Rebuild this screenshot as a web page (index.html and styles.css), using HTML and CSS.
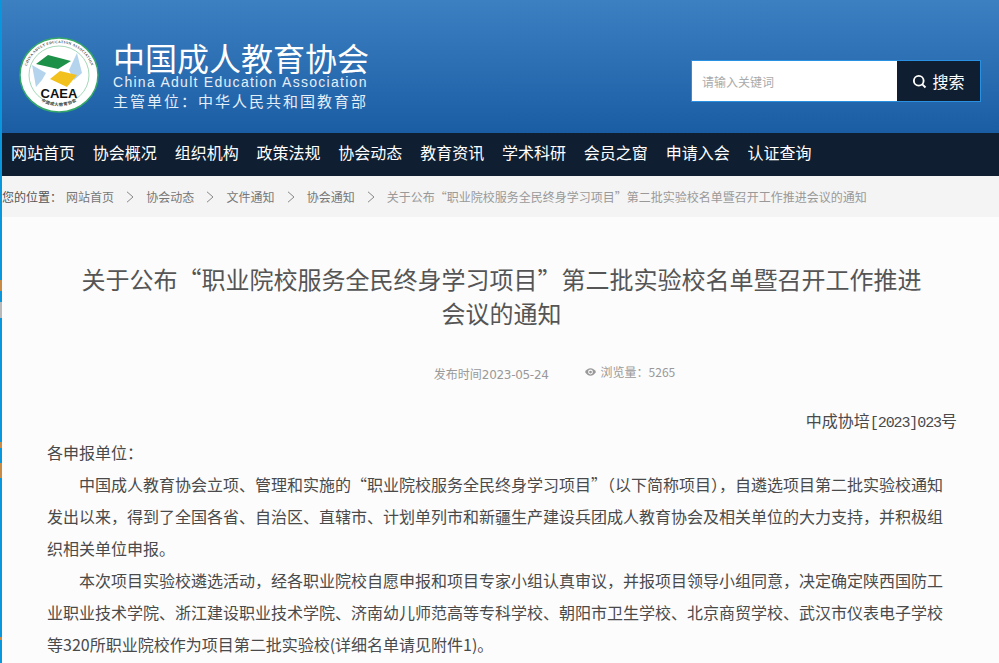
FILE: index.html
```html
<!DOCTYPE html>
<html lang="zh-CN">
<head>
    <meta charset="UTF-8">
    <meta name="viewport" content="width=device-width, initial-scale=1.0">
    <title>关于公布“职业院校服务全民终身学习项目”第二批实验校名单暨召开工作推进会议的通知</title>
    <link rel="stylesheet" href="styles.css">
</head>
<body>
    <div class="page">
        <header class="site-header">
            <div class="brand">
                <svg class="brand-logo" viewBox="0 0 80 76" preserveAspectRatio="none" aria-label="CAEA">
                    <defs>
                        <path id="ring-top" d="M6.500 38a33.500 32 0 0 1 67 0"/>
                        <path id="ring-bottom" d="M12 54a33 32 0 0 0 56 0"/>
                    </defs>
                    <ellipse cx="40" cy="38" rx="39" ry="37" fill="#fff" stroke="#35a869" stroke-width="1.500"/>
                    <ellipse cx="40" cy="38" rx="30" ry="29" fill="none" stroke="#8ccda5" stroke-width=".8"/>
                    <text class="logo-ring"><textPath href="#ring-top" startOffset="50%" text-anchor="middle">CHINA ADULT EDUCATION ASSOCIATION</textPath></text>
                    <text class="logo-ring-cn"><textPath href="#ring-bottom" startOffset="50%" text-anchor="middle">中国成人教育协会</textPath></text>
                    <polygon points="13,28 27,36 23,43 17,50" fill="#b4d4ee"/>
                    <polygon points="58,16 63,36 55,43 50,33" fill="#b4d4ee"/>
                    <polygon points="29,18 52,24 39,32 17,27" fill="#1d9147"/>
                    <polygon points="41,34 58,38 48,50 31,42" fill="#f2c11d"/>
                    <text class="logo-caea" x="40" y="61" text-anchor="middle">CAEA</text>
                </svg>
                <div class="brand-text">
                    <div class="brand-name">中国成人教育协会</div>
                    <div class="brand-en">China Adult Education Association</div>
                    <div class="brand-sub">主管单位：中华人民共和国教育部</div>
                </div>
            </div>
            <form class="search">
                <input class="search-input" type="text" placeholder="请输入关键词">
                <button class="search-btn" type="button">
                    <svg class="search-icon" viewBox="0 0 16 16"><circle cx="7.200" cy="7.200" r="5.200"/><path d="M11 11l3.400 3.400"/></svg>
                    搜索
                </button>
            </form>
        </header>

        <nav class="main-nav">
            <a href="#">网站首页</a>
            <a href="#">协会概况</a>
            <a href="#">组织机构</a>
            <a href="#">政策法规</a>
            <a href="#">协会动态</a>
            <a href="#">教育资讯</a>
            <a href="#">学术科研</a>
            <a href="#">会员之窗</a>
            <a href="#">申请入会</a>
            <a href="#">认证查询</a>
        </nav>

        <div class="crumbs">
            <span class="crumbs-label">您的位置：</span>
            <a href="#">网站首页</a>
            <svg class="crumb-sep" viewBox="0 0 8 12"><path d="M1 .8L7 6l-6 5.200"/></svg>
            <a href="#">协会动态</a>
            <svg class="crumb-sep" viewBox="0 0 8 12"><path d="M1 .8L7 6l-6 5.200"/></svg>
            <a href="#">文件通知</a>
            <svg class="crumb-sep" viewBox="0 0 8 12"><path d="M1 .8L7 6l-6 5.200"/></svg>
            <a href="#">协会通知</a>
            <svg class="crumb-sep" viewBox="0 0 8 12"><path d="M1 .8L7 6l-6 5.200"/></svg>
            <span class="crumb-current">关于公布“职业院校服务全民终身学习项目”第二批实验校名单暨召开工作推进会议的通知</span>
        </div>

        <main class="article">
            <h1 class="article-title">关于公布“职业院校服务全民终身学习项目”第二批实验校名单暨召开工作推进会议的通知</h1>
            <div class="article-meta">
                <span class="meta-date">发布时间<span class="meta-num">2023-05-24</span></span>
                <span class="meta-views">
                    <svg class="eye-icon" viewBox="0 0 12 8"><path d="M0 4c1.600-2.600 3.600-4 6-4s4.400 1.400 6 4c-1.600 2.600-3.600 4-6 4s-4.400-1.400-6-4z"/><circle cx="6" cy="4" r="2.600" fill="#fcfcfc"/><circle cx="6" cy="4" r="1.500"/></svg>
                    浏览量：5265
                </span>
            </div>
            <p class="doc-no">中成协培<span class="doc-num">[2023]023</span>号</p>
            <p>各申报单位：</p>
            <p class="indent">中国成人教育协会立项、管理和实施的“职业院校服务全民终身学习项目”（以下简称项目），自遴选项目第二批实验校通知发出以来，得到了全国各省、自治区、直辖市、计划单列市和新疆生产建设兵团成人教育协会及相关单位的大力支持，并积极组织相关单位申报。</p>
            <p class="indent">本次项目实验校遴选活动，经各职业院校自愿申报和项目专家小组认真审议，并报项目领导小组同意，决定确定陕西国防工业职业技术学院、浙江建设职业技术学院、济南幼儿师范高等专科学校、朝阳市卫生学校、北京商贸学校、武汉市仪表电子学校等320所职业院校作为项目第二批实验校(详细名单请见附件1)。</p>
        </main>
    </div>
</body>
</html>
```

FILE: styles.css
```css
* {
    margin: 0;
    padding: 0;
    box-sizing: border-box;
}

html, body {
    height: 663px;
    overflow: hidden;
}

body {
    font-family: "Noto Sans CJK SC", "Liberation Sans", sans-serif;
    background: #fcfcfc;
    color: #4a4a4a;
}

/* thin strip of the window behind, down the left edge */
body::before {
    content: "";
    position: absolute;
    left: 0;
    top: 0;
    width: 2px;
    height: 663px;
    background: linear-gradient(180deg,
        #0a96dc 280px, #c98a45 280px, #c98a45 291px,
        #0a96dc 291px, #0a96dc 302px, #b9b9b9 302px, #b9b9b9 318px,
        #0a96dc 318px, #0a96dc 442px, #c98a45 442px, #c98a45 448px,
        #0a96dc 448px, #0a96dc 463px, #c98a45 463px, #c98a45 478px,
        #0a96dc 478px, #0a96dc 637px, #c98a45 637px, #c98a45 640px,
        #0a96dc 640px);
}

.page {
    margin-left: 2px;
}

a {
    color: inherit;
    text-decoration: none;
}

/* header */
.site-header {
    height: 133px;
    display: flex;
    align-items: flex-start;
    justify-content: space-between;
    background: linear-gradient(180deg, #3c80c2 0%, #1b5da3 100%);
}

.brand {
    display: flex;
    align-items: flex-start;
    margin: 37px 0 0 17px;
}

.brand-logo {
    width: 80px;
    height: 76px;
    flex: none;
}

.logo-ring {
    font: bold 3.600px "Liberation Serif", serif;
    letter-spacing: .35px;
    fill: #444;
}

.logo-ring-cn {
    font: bold 4.200px "Noto Sans CJK SC", sans-serif;
    letter-spacing: .5px;
    fill: #444;
}

.logo-caea {
    font: bold 13px "Liberation Sans", sans-serif;
    fill: #111;
}

.brand-text {
    margin-left: 14px;
    color: #fff;
    white-space: nowrap;
}

.brand-name {
    margin-top: 3px;
    font-size: 32px;
    line-height: 34px;
    font-weight: 400;
}

.brand-en {
    font-family: "Liberation Sans", sans-serif;
    font-size: 14px;
    line-height: 16px;
    letter-spacing: 1.280px;
    color: #e4eef8;
}

.brand-sub {
    margin-top: 1px;
    font-size: 15px;
    line-height: 20px;
    letter-spacing: 2px;
    color: #e4eef8;
}

.search {
    display: flex;
    width: 290px;
    height: 42px;
    margin: 60px 18px 0 0;
    border: 1px solid #2a90e2;
}

.search-input {
    width: 205px;
    border: 0;
    outline: 0;
    padding-left: 10px;
    background: #fff;
    font: 12px "Noto Sans CJK SC", sans-serif;
}

.search-input::placeholder {
    color: #aaa;
}

.search-btn {
    flex: 1;
    display: flex;
    align-items: center;
    justify-content: center;
    gap: 5px;
    border: 0;
    background: #0f1e30;
    color: #fff;
    font: 16px "Noto Sans CJK SC", sans-serif;
}

.search-icon {
    width: 15px;
    height: 15px;
    fill: none;
    stroke: #fff;
    stroke-width: 2;
}

/* nav */
.main-nav {
    height: 43px;
    display: flex;
    align-items: center;
    padding-bottom: 6px;
    background: #0f1e30;
}

.main-nav a {
    padding: 0 9px;
    margin-right: -.2px;
    font-size: 16px;
    color: #fff;
    white-space: nowrap;
}

/* breadcrumb */
.crumbs {
    height: 41px;
    display: flex;
    align-items: center;
    background: #f4f4f4;
    font-size: 12px;
    color: #777;
    white-space: nowrap;
}

.crumbs-label {
    color: #555;
    margin-right: 4px;
}

.crumb-sep {
    width: 8px;
    height: 12px;
    margin: 0 12.100px;
    fill: none;
    stroke: #888;
    stroke-width: 1;
}

.crumb-current {
    color: #999;
}

/* article */
.article {
    padding: 0 43px 0 45px;
    font-size: 16px;
    line-height: 32px;
}

.article-title {
    padding: 45px 30px 0;
    font-size: 24px;
    font-weight: 400;
    line-height: 34px;
    text-align: center;
    color: #555;
}

.article-meta {
    display: flex;
    justify-content: center;
    gap: 36px;
    margin-top: 32px;
    padding-left: 106px;
    font-size: 12px;
    line-height: 20px;
    color: #999;
}

.meta-date {
    padding-top: 2px;
}

.meta-num {
    font-family: "DejaVu Sans", sans-serif;
    letter-spacing: -.3px;
}

.meta-views {
    display: flex;
    align-items: center;
    gap: 5px;
    height: 20px;
}

.eye-icon {
    width: 11px;
    height: 8px;
    fill: #999;
}

.doc-no {
    margin: 19px -1px 0 0;
    text-align: right;
}

.doc-num {
    font-family: "Liberation Mono", monospace;
    font-size: 15px;
    line-height: 1;
    letter-spacing: -1.100px;
}

.indent {
    text-indent: 2em;
}
```
